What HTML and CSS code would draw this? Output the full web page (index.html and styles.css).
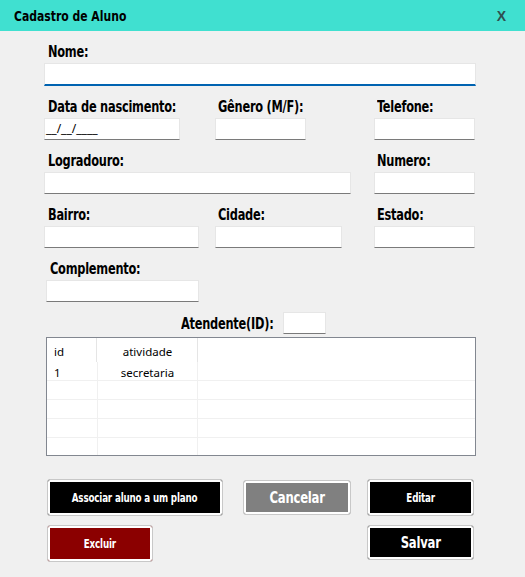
FILE: index.html
```html
<!DOCTYPE html>
<html lang="pt-BR">
<head>
<meta charset="utf-8">
<title>Cadastro de Aluno</title>
<link rel="stylesheet" href="styles.css">
</head>
<body>
<div class="window">
  <header class="titlebar">
    <span class="title"><span class="cond">Cadastro de Aluno</span></span>
    <span class="close">X</span>
  </header>

  <main class="form">
    <div class="row row-first">
      <div class="field w-nome">
        <label class="lbl"><span class="cond">Nome:</span></label>
        <div class="input input-focus"></div>
      </div>
    </div>

    <div class="row">
      <div class="field w-data">
        <label class="lbl"><span class="cond">Data de nascimento:</span></label>
        <div class="input"><span class="mask">__/__/____</span></div>
      </div>
      <div class="field w-genero ml-35">
        <label class="lbl lbl-3"><span class="cond">Gênero (M/F):</span></label>
        <div class="input"></div>
      </div>
      <div class="field w-side ml-68">
        <label class="lbl lbl-3"><span class="cond">Telefone:</span></label>
        <div class="input"></div>
      </div>
    </div>

    <div class="row">
      <div class="field w-logradouro">
        <label class="lbl"><span class="cond">Logradouro:</span></label>
        <div class="input"></div>
      </div>
      <div class="field w-side ml-23">
        <label class="lbl lbl-3"><span class="cond">Numero:</span></label>
        <div class="input"></div>
      </div>
    </div>

    <div class="row">
      <div class="field w-bairro">
        <label class="lbl"><span class="cond">Bairro:</span></label>
        <div class="input"></div>
      </div>
      <div class="field w-cidade ml-16">
        <label class="lbl lbl-3"><span class="cond">Cidade:</span></label>
        <div class="input"></div>
      </div>
      <div class="field w-side ml-32">
        <label class="lbl lbl-3"><span class="cond">Estado:</span></label>
        <div class="input"></div>
      </div>
    </div>

    <div class="row">
      <div class="field w-compl ml-2">
        <label class="lbl"><span class="cond">Complemento:</span></label>
        <div class="input"></div>
      </div>
    </div>

    <div class="row row-atendente">
      <label class="lbl-inline"><span class="cond">Atendente(ID):</span></label>
      <div class="input w-atendente"></div>
    </div>

    <div class="grid-table">
      <div class="tr thead">
        <div class="td c-id">id</div>
        <div class="td c-ativ">atividade</div>
        <div class="td c-rest"></div>
      </div>
      <div class="tr">
        <div class="td c-id">1</div>
        <div class="td c-ativ">secretaria</div>
        <div class="td c-rest"></div>
      </div>
      <div class="tr"><div class="td c-id"></div><div class="td c-ativ"></div><div class="td c-rest"></div></div>
      <div class="tr"><div class="td c-id"></div><div class="td c-ativ"></div><div class="td c-rest"></div></div>
      <div class="tr"><div class="td c-id"></div><div class="td c-ativ"></div><div class="td c-rest"></div></div>
      <div class="tr"><div class="td c-id"></div><div class="td c-ativ"></div><div class="td c-rest"></div></div>
    </div>

    <div class="buttons">
      <button class="btn btn-black btn-assoc"><span class="bcond">Associar aluno a um plano</span></button>
      <button class="btn btn-gray btn-big btn-cancel"><span class="bcond">Cancelar</span></button>
      <button class="btn btn-black btn-editar"><span class="bcond">Editar</span></button>
      <button class="btn btn-red btn-excluir"><span class="bcond">Excluir</span></button>
      <button class="btn btn-black btn-big btn-salvar"><span class="bcond">Salvar</span></button>
    </div>
  </main>
</div>
</body>
</html>
```

FILE: styles.css
```css
* { box-sizing: border-box; }

html, body {
  margin: 0;
  padding: 0;
}

body {
  width: 525px;
  height: 577px;
  overflow: hidden;
  background: #f0f0f0;
  font-family: "DejaVu Sans Condensed", "DejaVu Sans", sans-serif;
  color: #000;
}

.window {
  width: 525px;
  height: 577px;
}

.cond {
  display: inline-block;
  transform: scaleX(0.79);
  transform-origin: left center;
  white-space: nowrap;
}

.titlebar {
  height: 31px;
  background: #40e0d0;
  display: flex;
  align-items: center;
  justify-content: space-between;
  padding: 0 19px 0 14px;
}

.title {
  font-weight: bold;
  font-size: 14px;
  line-height: 17px;
  padding-top: 1px;
}

.title .cond { transform: scaleX(0.86); }

.close {
  font-family: "Liberation Sans", sans-serif;
  font-weight: bold;
  font-size: 14px;
  color: #2f4f4f;
  padding-top: 1px;
}

.form {
  padding: 12px 0 0 44px;
}

.row {
  display: flex;
  margin-top: 12px;
}

.row-first { margin-top: 0; }

.field {
  display: flex;
  flex-direction: column;
}

.lbl, .lbl-inline {
  display: block;
  height: 17px;
  line-height: 17px;
  font-weight: bold;
  font-size: 16px;
  letter-spacing: -0.3px;
  white-space: nowrap;
  padding-left: 4px;
  margin-bottom: 3px;
}

.lbl-3 { padding-left: 3px; }

.input {
  height: 22px;
  background: #fff;
  border: 1px solid #e6e6e6;
  border-bottom: 1px solid #7a7a7a;
  display: flex;
  align-items: center;
}

.input-focus {
  height: 23px;
  border-bottom: 2px solid #0063b1;
}

.mask {
  font-family: "Noto Sans", sans-serif;
  font-size: 12px;
  padding-left: 1px;
  line-height: 1;
}

.w-nome { width: 432px; }
.w-data { width: 136px; }
.w-genero { width: 91px; }
.w-side { width: 101px; }
.w-logradouro { width: 307px; }
.w-bairro { width: 155px; }
.w-cidade { width: 127px; }
.w-compl { width: 153px; }
.w-atendente { width: 43px; }

.ml-2 { margin-left: 2px; }
.ml-16 { margin-left: 16px; }
.ml-23 { margin-left: 23px; }
.ml-32 { margin-left: 32px; }
.ml-35 { margin-left: 35px; }
.ml-68 { margin-left: 68px; }

.row-atendente {
  margin-top: 10px;
  align-items: center;
  padding-left: 137px;
}

.lbl-inline {
  width: 102px;
  padding-left: 0;
  margin: 0;
}

.grid-table {
  margin: 3px 0 0 2px;
  width: 430px;
  height: 119px;
  border: 1px solid #828790;
  background: #fff;
  overflow: hidden;
  font-family: "Noto Sans", "Open Sans", sans-serif;
  font-size: 11.5px;
}

.tr {
  display: grid;
  grid-template-columns: 51px 100px 1fr;
  height: 19px;
  border-bottom: 1px solid #f0f0f0;
}

.tr.thead {
  height: 24px;
  border-bottom: none;
}

.td {
  display: flex;
  align-items: center;
  border-right: 1px solid #f0f0f0;
  white-space: nowrap;
}

.thead .td {
  border-right-color: #e5e5e5;
  padding-top: 2px;
}

.thead .c-id { width: 50px; }

.td.c-rest { border-right: none; }

.c-id { padding-left: 7px; }
.c-ativ { justify-content: center; }

.tr:nth-child(2) .td { padding-top: 2px; }

.buttons {
  display: grid;
  grid-template-columns: 176px 108px 107px;
  column-gap: 20px;
  row-gap: 9px;
  margin: 23px 0 0 3px;
  grid-template-rows: 37px 37px;
}

.btn {
  border: 1px solid #c8c8c8;
  border-radius: 3px;
  box-shadow: inset 0 0 0 2px #fff;
  color: #fff;
  font-family: "DejaVu Sans Condensed", "DejaVu Sans", sans-serif;
  font-weight: bold;
  font-size: 12px;
  letter-spacing: -0.2px;
  padding: 0;
  display: flex;
  align-items: center;
  justify-content: center;
  cursor: pointer;
}

.bcond {
  display: inline-block;
  white-space: nowrap;
  transform: scaleX(0.81);
  transform-origin: center center;
}

.btn-big { font-size: 16px; letter-spacing: -0.3px; }

.btn-black { background: #000; }
.btn-gray { background: #808080; }
.btn-red { background: #8b0000; }

.btn-assoc { grid-column: 1; grid-row: 1; }
.btn-cancel { grid-column: 2; grid-row: 1; height: 35px; align-self: center; }
.btn-editar { grid-column: 3; grid-row: 1; margin-left: -4px; width: 107px; }
.btn-excluir { grid-column: 1; grid-row: 2; width: 106px; }
.btn-salvar { grid-column: 3; grid-row: 2; height: 35px; margin-left: -4px; width: 107px; }
```
